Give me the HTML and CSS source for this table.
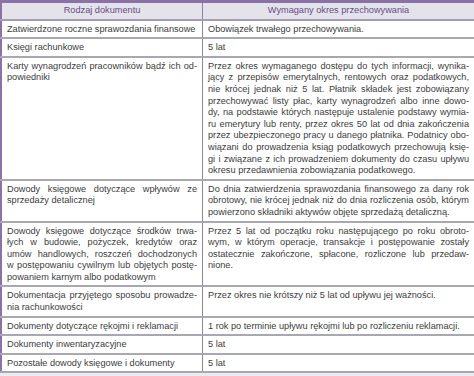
FILE: index.html
```html
<!DOCTYPE html>
<html lang="pl">
<head>
<meta charset="utf-8">
<link rel="stylesheet" href="styles.css">
</head>
<body>
<table class="docs">
  <thead>
    <tr><th class="c1">Rodzaj dokumentu</th><th class="c2">Wymagany okres przechowywania</th></tr>
  </thead>
  <tbody>
    <tr><td>Zatwierdzone roczne sprawozdania finansowe</td><td>Obowiązek trwałego przechowywania.</td></tr>
    <tr><td>Księgi rachunkowe</td><td>5 lat</td></tr>
    <tr>
      <td><span class="j">Karty wynagrodzeń pracowników bądź ich od-</span><span class="l">powiedniki</span></td>
      <td><span class="j">Przez okres wymaganego dostępu do tych informacji, wynika-</span><span class="j">jący z przepisów emerytalnych, rentowych oraz podatkowych,</span><span class="j">nie krócej jednak niż 5 lat. Płatnik składek jest zobowiązany</span><span class="j">przechowywać listy płac, karty wynagrodzeń albo inne dowo-</span><span class="j">dy, na podstawie których następuje ustalenie podstawy wymia-</span><span class="j">ru emerytury lub renty, przez okres 50 lat od dnia zakończenia</span><span class="j">przez ubezpieczonego pracy u danego płatnika. Podatnicy obo-</span><span class="j">wiązani do prowadzenia ksiąg podatkowych przechowują księ-</span><span class="j">gi i związane z ich prowadzeniem dokumenty do czasu upływu</span><span class="l">okresu przedawnienia zobowiązania podatkowego.</span></td>
    </tr>
    <tr>
      <td><span class="j">Dowody księgowe dotyczące wpływów ze</span><span class="l">sprzedaży detalicznej</span></td>
      <td><span class="j">Do dnia zatwierdzenia sprawozdania finansowego za dany rok</span><span class="j">obrotowy, nie krócej jednak niż do dnia rozliczenia osób, którym</span><span class="l">powierzono składniki aktywów objęte sprzedażą detaliczną.</span></td>
    </tr>
    <tr>
      <td><span class="j">Dowody księgowe dotyczące środków trwa-</span><span class="j">łych w budowie, pożyczek, kredytów oraz</span><span class="j">umów handlowych, roszczeń dochodzonych</span><span class="j">w postępowaniu cywilnym lub objętych postę-</span><span class="l">powaniem karnym albo podatkowym</span></td>
      <td><span class="j">Przez 5 lat od początku roku następującego po roku obroto-</span><span class="j">wym, w którym operacje, transakcje i postępowanie zostały</span><span class="j">ostatecznie zakończone, spłacone, rozliczone lub przedaw-</span><span class="l">nione.</span></td>
    </tr>
    <tr>
      <td><span class="j">Dokumentacja przyjętego sposobu prowadze-</span><span class="l">nia rachunkowości</span></td>
      <td>Przez okres nie krótszy niż 5 lat od upływu jej ważności.</td>
    </tr>
    <tr><td>Dokumenty dotyczące rękojmi i reklamacji</td><td class="nw">1 rok po terminie upływu rękojmi lub po rozliczeniu reklamacji.</td></tr>
    <tr><td>Dokumenty inwentaryzacyjne</td><td>5 lat</td></tr>
    <tr><td>Pozostałe dowody księgowe i dokumenty</td><td>5 lat</td></tr>
  </tbody>
</table>
</body>
</html>
```
FILE: styles.css
```css
html, body {
  margin: 0;
  padding: 0;
  background: #ecebf1;
}
.docs {
  width: 474px;
  border-collapse: collapse;
  table-layout: fixed;
  font-family: "Liberation Sans", Arial, sans-serif;
  font-size: 9.2px;
  line-height: 11.6px;
  color: #3c3c3c;
  background: #ffffff;
  border-top: 3px solid #8a72a9;
  border-left: 2px solid #8a72a9;
}
.docs th {
  background: #e4e3ea;
  color: #664c8a;
  font-weight: normal;
  padding: 2px 5px 2px;
  text-align: center;
  border-bottom: 2px solid #a49bb6;
}
.docs th.c1 {
  width: 190px;
  border-right: 1px solid #8f84a6;
}
.docs td {
  vertical-align: top;
  padding: 3px 5px 2px 5px;
  text-align: left;
  border-bottom: 2px solid #aaa7b4;
}
.docs td:first-child {
  border-right: 1px solid #8f84a6;
}
.nw {
  white-space: nowrap;
}
.j {
  display: block;
  text-align: justify;
  text-align-last: justify;
  white-space: nowrap;
}
.l {
  display: block;
  white-space: nowrap;
}
```
